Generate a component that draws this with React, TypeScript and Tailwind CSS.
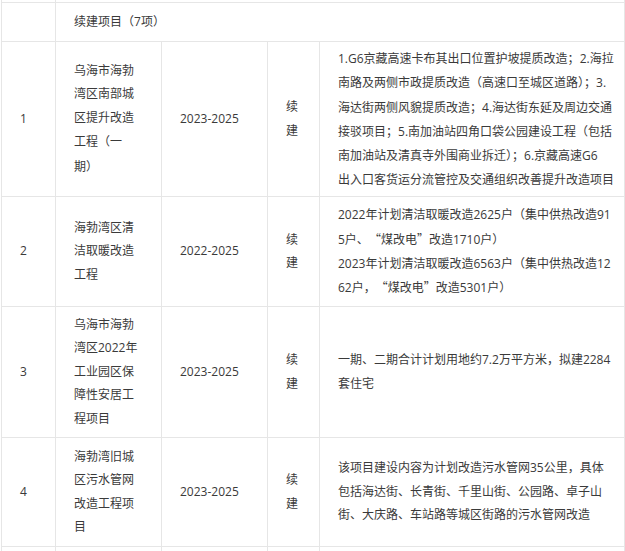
import React from "react";

const cell =
  "border border-[#e6e6e6] px-[18px] py-0 align-middle text-left";

function Txt({ s }: { s: string }) {
  const parts = s.split(/([“”；（）])/);
  return (
    <>
      {parts.map((p, i) =>
        p === "“" ? (
          <span
            key={i}
            className="inline-block w-[12px] text-right font-['Noto_Sans_CJK_SC',sans-serif]"
          >
            {p}
          </span>
        ) : p === "”" ? (
          <span
            key={i}
            className="inline-block w-[12px] text-left font-['Noto_Sans_CJK_SC',sans-serif]"
          >
            {p}
          </span>
        ) : /^[；（）]$/.test(p) ? (
          <span key={i} className="font-['Noto_Sans_CJK_SC',sans-serif]">
            {p}
          </span>
        ) : (
          <React.Fragment key={i}>{p}</React.Fragment>
        )
      )}
    </>
  );
}

function Lines({ lines }: { lines: string[] }) {
  return (
    <>
      {lines.map((l, i) => (
        <div key={i} className="whitespace-nowrap">
          <Txt s={l} />
        </div>
      ))}
    </>
  );
}

type Row = {
  no: string;
  name: string[];
  years: string;
  desc: string[];
  h: string;
};

const rows: Row[] = [
  {
    no: "1",
    name: ["乌海市海勃", "湾区南部城", "区提升改造", "工程（一", "期）"],
    years: "2023-2025",
    desc: [
      "1.G6京藏高速卡布其出口位置护坡提质改造；2.海拉",
      "南路及两侧市政提质改造（高速口至城区道路）；3.",
      "海达街两侧风貌提质改造；4.海达街东延及周边交通",
      "接驳项目；5.南加油站四角口袋公园建设工程（包括",
      "南加油站及清真寺外围商业拆迁）；6.京藏高速G6",
      "出入口客货运分流管控及交通组织改善提升改造项目",
    ],
    h: "h-[155px]",
  },
  {
    no: "2",
    name: ["海勃湾区清", "洁取暖改造", "工程"],
    years: "2022-2025",
    desc: [
      "2022年计划清洁取暖改造2625户（集中供热改造91",
      "5户、“煤改电”改造1710户）",
      "2023年计划清洁取暖改造6563户（集中供热改造12",
      "62户，“煤改电”改造5301户）",
    ],
    h: "h-[110px]",
  },
  {
    no: "3",
    name: ["乌海市海勃", "湾区2022年", "工业园区保", "障性安居工", "程项目"],
    years: "2023-2025",
    desc: ["一期、二期合计计划用地约7.2万平方米，拟建2284", "套住宅"],
    h: "h-[131px]",
  },
  {
    no: "4",
    name: ["海勃湾旧城", "区污水管网", "改造工程项", "目"],
    years: "2023-2025",
    desc: [
      "该项目建设内容为计划改造污水管网35公里，具体",
      "包括海达街、长青街、千里山街、公园路、卓子山",
      "街、大庆路、车站路等城区街路的污水管网改造",
    ],
    h: "h-[109px]",
  },
];

export default function App() {
  return (
    <div className="w-[625px] h-[551px] overflow-hidden bg-white">
      <table className="ml-[1px] w-[624px] table-fixed border-collapse font-['Open_Sans','Noto_Sans_CJK_SC',sans-serif] text-[12px] leading-[23.4px] text-[#3a3a3a]">
        <colgroup>
          <col className="w-[54px]" />
          <col className="w-[106px]" />
          <col className="w-[106px]" />
          <col className="w-[52px]" />
          <col />
        </colgroup>
        <tbody>
          <tr className="h-[2px]">
            <td className="border-x border-b border-[#e6e6e6] p-0" />
            <td colSpan={4} className="border-x border-b border-[#e6e6e6] p-0" />
          </tr>
          <tr className="h-[39px]">
            <td className={cell} />
            <td colSpan={4} className={cell}>
              <Txt s="续建项目（7项）" />
            </td>
          </tr>
          {rows.map((r) => (
            <tr key={r.no} className={r.h}>
              <td className={cell}>{r.no}</td>
              <td className={cell}>
                <Lines lines={r.name} />
              </td>
              <td className={cell}>{r.years}</td>
              <td className={cell}>
                <div>续</div>
                <div>建</div>
              </td>
              <td className={cell}>
                <Lines lines={r.desc} />
              </td>
            </tr>
          ))}
          <tr className="h-[40px]">
            <td className={cell} />
            <td className={cell} />
            <td className={cell} />
            <td className={cell} />
            <td className={cell} />
          </tr>
        </tbody>
      </table>
    </div>
  );
}
